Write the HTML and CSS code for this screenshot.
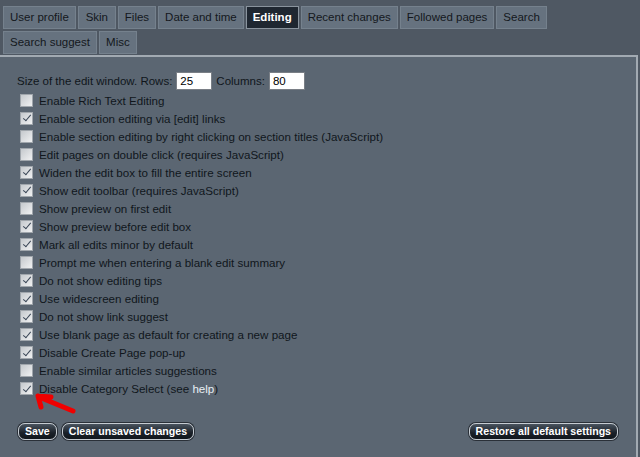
FILE: index.html
```html
<!DOCTYPE html>
<html>
<head>
<meta charset="utf-8">
<link rel="stylesheet" href="styles.css">
</head>
<body>
<div class="tabs">
  <span class="tab">User profile</span>
  <span class="tab">Skin</span>
  <span class="tab">Files</span>
  <span class="tab">Date and time</span>
  <span class="tab active">Editing</span>
  <span class="tab">Recent changes</span>
  <span class="tab">Followed pages</span>
  <span class="tab">Search</span>
  <span class="tab">Search suggest</span>
  <span class="tab">Misc</span>
</div>
<div class="panel">
  <div class="size-row">Size of the edit window. Rows: <span class="field">25</span> Columns: <span class="field">80</span></div>
  <ul class="opts">
    <li><span class="box"></span><span>Enable Rich Text Editing</span></li>
    <li><span class="box on"></span><span>Enable section editing via [edit] links</span></li>
    <li><span class="box"></span><span>Enable section editing by right clicking on section titles (JavaScript)</span></li>
    <li><span class="box"></span><span>Edit pages on double click (requires JavaScript)</span></li>
    <li><span class="box on"></span><span>Widen the edit box to fill the entire screen</span></li>
    <li><span class="box on"></span><span>Show edit toolbar (requires JavaScript)</span></li>
    <li><span class="box"></span><span>Show preview on first edit</span></li>
    <li><span class="box on"></span><span>Show preview before edit box</span></li>
    <li><span class="box on"></span><span>Mark all edits minor by default</span></li>
    <li><span class="box"></span><span>Prompt me when entering a blank edit summary</span></li>
    <li><span class="box on"></span><span>Do not show editing tips</span></li>
    <li><span class="box on"></span><span>Use widescreen editing</span></li>
    <li><span class="box on"></span><span>Do not show link suggest</span></li>
    <li><span class="box on"></span><span>Use blank page as default for creating a new page</span></li>
    <li><span class="box on"></span><span>Disable Create Page pop-up</span></li>
    <li><span class="box"></span><span>Enable similar articles suggestions</span></li>
    <li class="last"><span class="box on"></span><span>Disable Category Select (see <span class="link">help</span>)</span>
      <svg class="arrow" width="50" height="24" viewBox="0 0 50 24"><path d="M40 19 L6 5 M5 4 L18 5 M5 4 L8 15" stroke="#f00000" stroke-width="5" fill="none" stroke-linecap="round"/></svg>
    </li>
  </ul>
  <div class="buttons">
    <div class="left">
      <span class="btn">Save</span>
      <span class="btn">Clear unsaved changes</span>
    </div>
    <span class="btn">Restore all default settings</span>
  </div>
</div>
</body>
</html>
```
FILE: styles.css
```css
html, body {
  margin: 0;
  padding: 0;
  background: #4f5863;
  font-family: "Liberation Sans", Arial, sans-serif;
  font-size: 11.5px;
  height: 457px;
  overflow: hidden;
}
.tabs {
  display: flex;
  flex-wrap: wrap;
  gap: 2px;
  padding: 6px 40px 0 3px;
}
.tab {
  box-sizing: border-box;
  min-width: 38px;
  text-align: center;
  height: 23px;
  line-height: 21px;
  padding: 0 6px;
  background: #66727f;
  border: 1px solid #75818d;
  color: #14181d;
  font-size: 11.5px;
}
.tab.active {
  background: #1f2731;
  color: #ffffff;
  font-weight: bold;
  border-color: #8a949e;
}
.panel {
  box-sizing: border-box;
  margin-top: 1px;
  margin-right: 2px;
  background: #5b6672;
  border-top: 2px solid #a2aab2;
  border-right: 2px solid #a2aab2;
  height: 402px;
  padding: 15px 17px 0 17px;
  color: #10161c;
}
.size-row {
  display: flex;
  align-items: center;
  gap: 4px;
  height: 18px;
  font-size: 11.5px;
}
.field {
  display: inline-block;
  width: 31px;
  height: 16px;
  line-height: 16px;
  background: #fff;
  border: 1px solid #7a7f86;
  padding-left: 3px;
  color: #000;
  font-size: 11.5px;
}
.opts {
  list-style: none;
  margin: 1px 0 0 0;
  padding: 0 0 0 3px;
}
.opts li {
  position: relative;
  display: flex;
  align-items: center;
  height: 18.06px;
  font-size: 11.6px;
}
.box {
  width: 11px;
  height: 11px;
  margin-right: 6px;
  border: 1px solid #a0a6ac;
  background: linear-gradient(135deg, #c5c9cd, #f0f1f2);
  box-sizing: content-box;
  position: relative;
}
.box.on::after {
  content: "";
  position: absolute;
  left: 3.5px;
  top: 0.5px;
  width: 3px;
  height: 7px;
  border: solid #3a4656;
  border-width: 0 1.6px 1.6px 0;
  transform: rotate(40deg);
}
.link {
  color: #e8eef4;
}
.arrow {
  position: absolute;
  left: 13px;
  top: 12px;
}
.buttons {
  display: flex;
  justify-content: space-between;
  align-items: center;
  margin-top: 25px;
  padding-left: 1px;
  padding-right: 1px;
}
.left {
  display: flex;
  gap: 5px;
}
.btn {
  display: inline-block;
  height: 15px;
  line-height: 15px;
  padding: 0 6px;
  border: 1px solid #c6ccd2;
  border-radius: 7px;
  background: linear-gradient(#4a545f, #1a2028 60%, #11161c);
  color: #fff;
  font-weight: bold;
  font-size: 10.6px;
  box-shadow: 0 0 0 1px #2a3038;
}
```
